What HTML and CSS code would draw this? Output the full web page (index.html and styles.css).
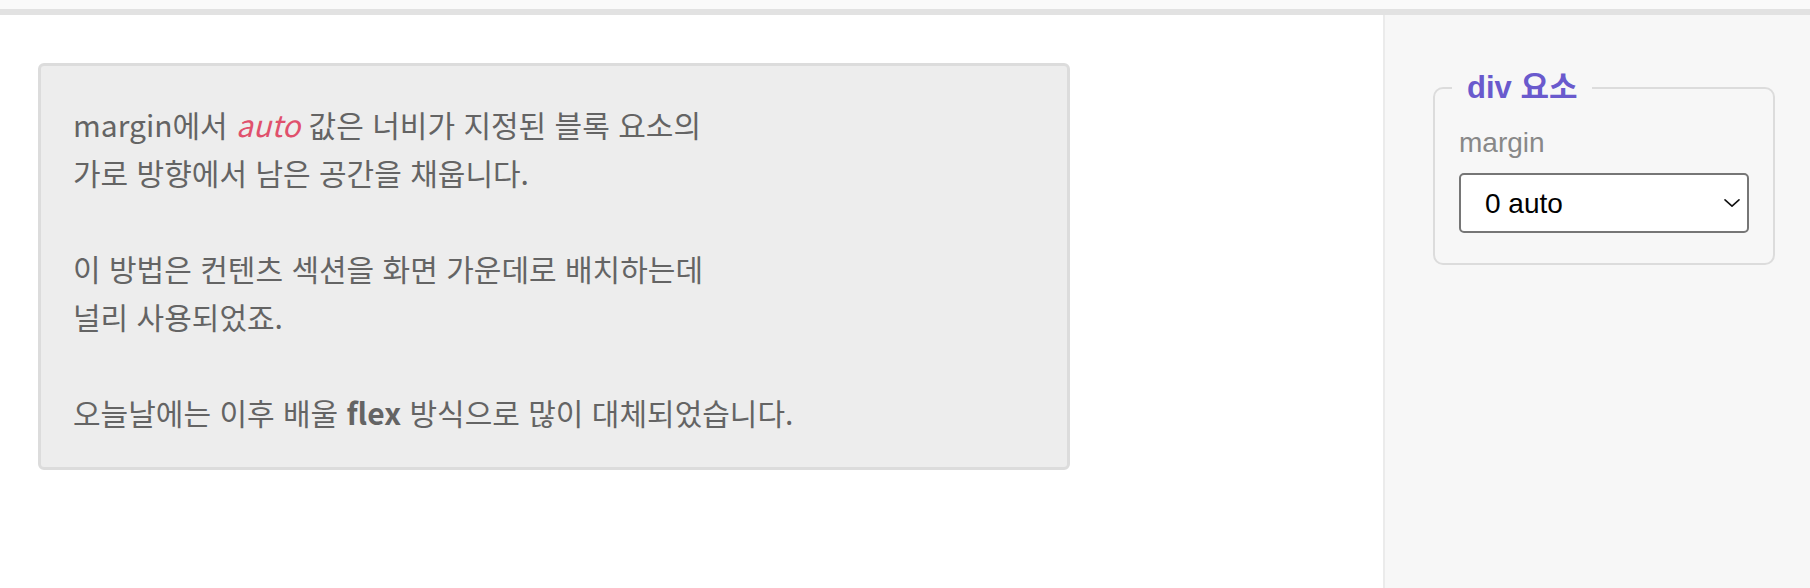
FILE: index.html
```html
<!DOCTYPE html>
<html lang="ko">
<head>
<meta charset="utf-8">
<title>margin auto</title>
<link rel="stylesheet" href="styles.css">
</head>
<body>
<div class="topbar"></div>
<div class="layout">
  <main class="main">
    <div class="card">
      <p class="desc">margin에서 <em class="kw">auto</em> 값은 너비가 지정된 블록 요소의<br>가로 방향에서 남은 공간을 채웁니다.<br><br>이 방법은 컨텐츠 섹션을 화면 가운데로 배치하는데<br>널리 사용되었죠.<br><br>오늘날에는 이후 배울 <strong class="bold">flex</strong> 방식으로 많이 대체되었습니다.</p>
    </div>
  </main>
  <aside class="sidebar">
    <fieldset class="panel">
      <legend class="panel-title">div 요소</legend>
      <label class="field-label" for="margin-select">margin</label>
      <div class="select-wrap">
        <select id="margin-select" class="select">
          <option>0 auto</option>
          <option>0</option>
          <option>auto</option>
        </select>
        <svg class="chevron" width="18" height="10" viewBox="0 0 18 10"><path d="M2 1.8 L9 8.2 L16 1.8" fill="none" stroke="#111" stroke-width="1.6" stroke-linecap="round" stroke-linejoin="round"/></svg>
      </div>
    </fieldset>
  </aside>
</div>
</body>
</html>
```
FILE: styles.css
```css
* { box-sizing: border-box; }
html, body { margin: 0; padding: 0; }
body {
  width: 1810px;
  height: 588px;
  overflow: hidden;
  background: #ffffff;
  font-family: "Noto Sans CJK KR", "Noto Sans", sans-serif;
}
.topbar {
  height: 15px;
  background: #fafafa;
  border-bottom: 6px solid #e2e2e2;
}
.layout {
  display: flex;
  height: 573px;
}
.main {
  flex: 1;
  background: #ffffff;
  padding: 48px 0 0 38px;
}
.card {
  width: 1032px;
  background: #ededed;
  border: 3px solid #dcdcdc;
  border-radius: 6px;
  padding: 34px 32px 31px;
}
.desc {
  margin: 0;
  font-size: 30px;
  line-height: 48px;
  color: #646464;
}
.kw {
  color: #e0506c;
  font-style: italic;
}
.bold { font-weight: 700; }
.sidebar {
  width: 427px;
  background: #f7f7f7;
  border-left: 2px solid #ebebeb;
  padding: 56px 35px 0 48px;
}
.panel {
  margin: 0;
  width: 342px;
  border: 2px solid #dcdcdc;
  border-radius: 10px;
  padding: 22px 24px 30px;
  display: flex;
  flex-direction: column;
}
.panel-title {
  margin-left: -7px;
  padding: 0 15px;
  font-family: "Liberation Sans", "Noto Sans CJK KR", sans-serif;
  font-weight: 700;
  font-size: 31px;
  line-height: 34px;
  color: #6a5acd;
}
.field-label {
  font-family: "Liberation Sans", "Noto Sans CJK KR", sans-serif;
  font-size: 28px;
  line-height: 32px;
  color: #888888;
  margin-bottom: 14px;
}
.select-wrap {
  position: relative;
  width: 290px;
  height: 60px;
}
.select {
  -webkit-appearance: none;
  appearance: none;
  width: 100%;
  height: 100%;
  margin: 0;
  padding: 0 40px 0 24px;
  background: #ffffff;
  border: 2px solid #767676;
  border-radius: 5px;
  font-family: "Liberation Sans", sans-serif;
  font-size: 28px;
  color: #000000;
}
.chevron {
  position: absolute;
  right: 8px;
  top: 25px;
  pointer-events: none;
}
```
